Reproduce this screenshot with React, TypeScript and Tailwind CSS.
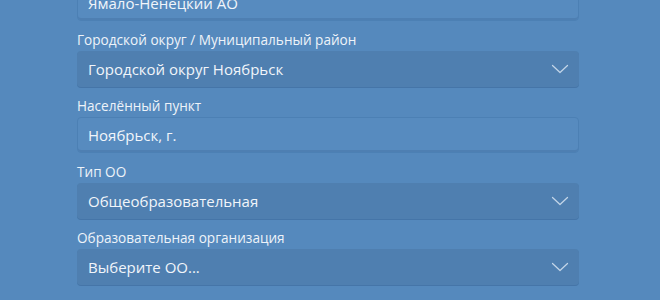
type Field = {
  label?: string
  value: string
  kind: "input" | "select"
}

const fields: Field[] = [
  { value: "Ямало-Ненецкий АО", kind: "input" },
  { label: "Городской округ / Муниципальный район", value: "Городской округ Ноябрьск", kind: "select" },
  { label: "Населённый пункт", value: "Ноябрьск, г.", kind: "input" },
  { label: "Тип ОО", value: "Общеобразовательная", kind: "select" },
  { label: "Образовательная организация", value: "Выберите ОО...", kind: "select" },
]

function Chevron() {
  return (
    <svg width="18" height="10" viewBox="0 0 18 10" fill="none" className="text-[#c3d5e8]">
      <path d="M1.5 1.5 L9 8.5 L16.5 1.5" stroke="currentColor" strokeWidth="1.25" strokeLinecap="round" strokeLinejoin="round" />
    </svg>
  )
}

function FormField({ field }: { field: Field }) {
  const isSelect = field.kind === "select"
  return (
    <div>
      {field.label && (
        <div className="h-[30px] pt-[9px] text-[13.6px] leading-[19px] text-[#eef3f9]">{field.label}</div>
      )}
      <div
        className={
          isSelect
            ? "flex h-[36px] items-center justify-between rounded-[4px] bg-[#4f7fb0] pl-[11px] pr-[10px] shadow-[0_1px_0_rgba(40,80,130,0.35)]"
            : "flex h-[36px] items-center rounded-[4px] border border-[#4c80b4] bg-[#578bbf] pl-[10px] shadow-[inset_0_-2px_0_rgba(60,100,150,0.3)]"
        }
      >
        <span className="text-[15px] text-[#f1f5fa]">{field.value}</span>
        {isSelect && <Chevron />}
      </div>
    </div>
  )
}

export default function App() {
  return (
    <div
      className="h-[300px] w-[660px] overflow-hidden bg-[#5589bd]"
      style={{ fontFamily: '"Open Sans", "Noto Sans", sans-serif' }}
    >
      <div className="ml-[77px] -mt-[15px] w-[502px]">
        {fields.map((f, i) => (
          <FormField key={i} field={f} />
        ))}
      </div>
    </div>
  )
}
